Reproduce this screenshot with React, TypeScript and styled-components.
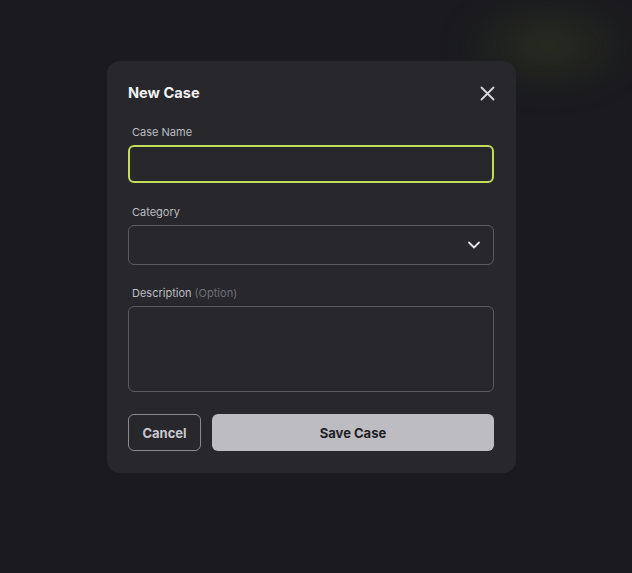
import React from "react";
import styled, { createGlobalStyle } from "styled-components";

const Global = createGlobalStyle`
  html, body { margin: 0; padding: 0; }
  body {
    background: #1b1b1f;
    font-family: Inter, "Noto Sans", sans-serif;
    -webkit-font-smoothing: antialiased;
  }
`;

const Page = styled.div`
  position: relative;
  width: 632px;
  height: 573px;
  overflow: hidden;
  background: #1b1b1f;
  display: flex;
  justify-content: flex-start;
  align-items: flex-start;
  padding: 61px 0 0 107px;
  box-sizing: border-box;
`;

const Glow = styled.div`
  position: absolute;
  left: 460px;
  top: -2px;
  width: 175px;
  height: 95px;
  border-radius: 50%;
  background: radial-gradient(ellipse at center, rgba(60, 66, 38, 0.5) 0%, rgba(40, 44, 30, 0.32) 45%, rgba(27, 27, 31, 0) 75%);
  filter: blur(12px);
`;

const Modal = styled.div`
  position: relative;
  width: 409px;
  box-sizing: border-box;
  background: #27272c;
  border-radius: 13px;
  padding: 22px 22px 22px 21px;
  display: flex;
  flex-direction: column;
`;

const Header = styled.div`
  display: flex;
  align-items: center;
  justify-content: space-between;
  height: 20px;
  margin-bottom: 22px;
`;

const Title = styled.h2`
  margin: 0;
  font-size: 14.6px;
  line-height: 20px;
  font-weight: 700;
  color: #f2f2f4;
  letter-spacing: 0;
`;

const CloseButton = styled.button`
  background: none;
  border: none;
  padding: 0;
  margin-right: -2px;
  width: 18px;
  height: 18px;
  display: flex;
  align-items: center;
  justify-content: center;
  color: #d8d8dc;
  cursor: pointer;
`;

const Field = styled.div<{ $gap?: number }>`
  display: flex;
  flex-direction: column;
  margin-bottom: ${(p) => p.$gap ?? 0}px;
`;

const Label = styled.label`
  font-size: 11px;
  color: #bdbdc2;
  margin: 0 0 6px 4px;
  line-height: 14px;
  height: 14px;
`;

const Optional = styled.span`
  color: #6f6f76;
`;

const TextInput = styled.input`
  height: 38px;
  box-sizing: border-box;
  border: 2px solid #c3dc5c;
  border-radius: 6px;
  background: transparent;
  outline: none;
  color: #eee;
  font: inherit;
  padding: 0 10px;
  margin: 0;
`;

const SelectBox = styled.div`
  height: 40px;
  box-sizing: border-box;
  border: 1px solid #5a5a60;
  border-radius: 6px;
  display: flex;
  align-items: center;
  justify-content: flex-end;
  padding-right: 12px;
  color: #e6e6ea;
`;

const TextArea = styled.textarea`
  height: 86px;
  box-sizing: border-box;
  border: 1px solid #5a5a60;
  border-radius: 6px;
  background: transparent;
  resize: none;
  outline: none;
  color: #eee;
  font: inherit;
  margin: 0;
`;

const Actions = styled.div`
  display: flex;
  gap: 11px;
  margin-top: 22px;
`;

const Button = styled.button<{ $primary?: boolean }>`
  height: 37px;
  box-sizing: border-box;
  border-radius: 6px;
  font-family: Inter, "Noto Sans", sans-serif;
  font-size: 13px;
  font-weight: 700;
  cursor: pointer;
  margin: 0;
  ${(p) =>
    p.$primary
      ? `flex: 1; background: #bdbcc1; color: #1f1f23; border: none;`
      : `width: 73px; background: transparent; color: #c9c9ce; border: 1px solid #8a8a90;`}
`;

export default function App() {
  return (
    <>
      <Global />
      <Page>
        <Glow />
        <Modal>
          <Header>
            <Title>New Case</Title>
            <CloseButton aria-label="Close">
              <svg width="15" height="15" viewBox="0 0 15 15" fill="none">
                <path d="M1.5 1.5L13.5 13.5M13.5 1.5L1.5 13.5" stroke="currentColor" strokeWidth="1.8" strokeLinecap="round" />
              </svg>
            </CloseButton>
          </Header>
          <Field $gap={22}>
            <Label>Case Name</Label>
            <TextInput type="text" />
          </Field>
          <Field $gap={21}>
            <Label>Category</Label>
            <SelectBox>
              <svg width="14" height="14" viewBox="0 0 14 14" fill="none">
                <path d="M2 4.5L7 9.5L12 4.5" stroke="currentColor" strokeWidth="1.8" strokeLinecap="round" strokeLinejoin="round" />
              </svg>
            </SelectBox>
          </Field>
          <Field>
            <Label>
              Description <Optional>(Option)</Optional>
            </Label>
            <TextArea />
          </Field>
          <Actions>
            <Button>Cancel</Button>
            <Button $primary>Save Case</Button>
          </Actions>
        </Modal>
      </Page>
    </>
  );
}
